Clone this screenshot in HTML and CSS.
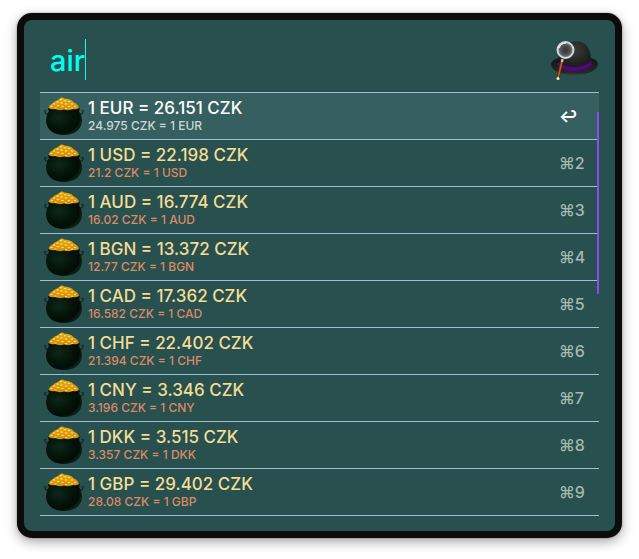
FILE: index.html
```html
<!DOCTYPE html>
<html lang="en">
<head>
<meta charset="utf-8">
<title>Exchange rates</title>
<link rel="stylesheet" href="styles.css">
</head>
<body>
<svg class="defs" aria-hidden="true">
  <defs>
    <radialGradient id="pot-fill" cx=".36" cy=".4" r=".62">
      <stop offset="0" stop-color="#10261a"/>
      <stop offset=".5" stop-color="#04170b"/>
      <stop offset=".9" stop-color="#020c05"/>
      <stop offset="1" stop-color="#0b1f14"/>
    </radialGradient>
    <linearGradient id="gold-fill" x1="0" y1="0" x2="0" y2="1">
      <stop offset="0" stop-color="#e8a516"/>
      <stop offset="1" stop-color="#d58c0c"/>
    </linearGradient>
    <symbol id="pot" viewBox="0 -1 40 40">
      <path d="M4 17L2 17Q0 14 .8 13.500Q1.800 13 2.500 14M36 17L38 17Q40 14 39.200 13.500Q38.200 13 37.500 14" fill="none" stroke="#101b17" stroke-width="1"/>
      <path d="M4.500 10.500Q7 9 20 9T35.500 10.500Q36.500 12.500 35 14Q38 18 38 23C38 33 30 38 20 38S2 33 2 23Q2 18 5 14Q3.500 12.500 4.500 10.500Z" fill="url(#pot-fill)"/>
      <path d="M4.500 11Q5 8 9 6Q10 4 13 3.500L17 .8Q19 0 20 1.500L24 2Q28 2.500 30 5.500Q34 7 35 11Q32 13 29 12Q25 14 20 12.500Q15 14 11 12Q8 13 4.500 11Z" fill="url(#gold-fill)"/>
      <g fill="#ffe052">
        <ellipse cx="17" cy="2.500" rx="1.400" ry=".7"/><ellipse cx="21" cy="3.800" rx="1.500" ry=".7"/><ellipse cx="13.500" cy="5" rx="1.500" ry=".7"/><ellipse cx="25" cy="4.500" rx="1.400" ry=".7"/><ellipse cx="17.500" cy="6" rx="1.500" ry=".7"/><ellipse cx="10" cy="7" rx="1.300" ry=".7"/><ellipse cx="22" cy="7" rx="1.500" ry=".7"/><ellipse cx="28" cy="7" rx="1.400" ry=".7"/><ellipse cx="14" cy="8.500" rx="1.500" ry=".7"/><ellipse cx="7.500" cy="9.500" rx="1.300" ry=".7"/><ellipse cx="18.500" cy="9.500" rx="1.500" ry=".7"/><ellipse cx="25" cy="9.500" rx="1.500" ry=".7"/><ellipse cx="31" cy="9.500" rx="1.300" ry=".7"/><ellipse cx="11.500" cy="11" rx="1.300" ry=".6"/><ellipse cx="22" cy="11.500" rx="1.300" ry=".6"/><ellipse cx="28" cy="11.200" rx="1.300" ry=".6"/>
      </g>
    </symbol>
  </defs>
</svg>
<main class="window">
  <header class="search">
    <input class="query" type="text" value="air" aria-label="Search" spellcheck="false">
    <svg class="hat" viewBox="0 0 51 50" aria-hidden="true">
      <defs>
        <radialGradient id="crown" cx=".5" cy=".3" r=".6"><stop offset="0" stop-color="#3a3b3b"/><stop offset="1" stop-color="#181919"/></radialGradient>
        <radialGradient id="lens"><stop offset="0" stop-color="#333"/><stop offset=".55" stop-color="#4b4e4f"/><stop offset="1" stop-color="#868a8b"/></radialGradient>
        <linearGradient id="brim" x1="0" y1="0" x2="0" y2="1"><stop offset="0" stop-color="#151616"/><stop offset=".85" stop-color="#252727"/><stop offset="1" stop-color="#3a3d3c"/></linearGradient>
      </defs>
      <path d="M3 25Q3 21 11 19L43 19Q50 21 50 25C50 31 40 36 27 36S3 32 3 25Z" fill="url(#brim)"/>
      <path d="M10 27Q9 8 22 3.500Q28 1 34 3.500Q43 7 43 23L43 27Q35 33 24 32Q14 31 10 27Z" fill="url(#crown)"/>
      <path d="M10 23Q16 28 27 28T43 21.500L44 26Q38 31.500 26 32Q14 31.500 9 26Z" fill="#55057d"/>
      <path d="M14.500 20L13.500 25" stroke="#c8cccc" stroke-width="2.400"/>
      <path d="M13.800 23L10 39" stroke="#5b2d0a" stroke-width="3.200"/>
      <path d="M13.800 23L10 39" stroke="#b66b22" stroke-width="1.400"/>
      <circle cx="10" cy="39.500" r="1.500" fill="#eee"/>
      <circle cx="17.500" cy="11" r="8" fill="url(#lens)" stroke="#d5d8d8" stroke-width="2"/>
      <path d="M11 9Q13 4 18 4" fill="none" stroke="#fff" stroke-width="1"/>
    </svg>
  </header>
  <section class="list">
    <ul class="results">
      <li><button class="row selected"><svg class="pot" aria-hidden="true"><use href="#pot"/></svg><span class="text"><span class="title">1 EUR = 26.151 CZK</span><span class="sub">24.975 CZK = 1 EUR</span></span><span class="key">↩</span></button></li>
      <li><button class="row"><svg class="pot" aria-hidden="true"><use href="#pot"/></svg><span class="text"><span class="title">1 USD = 22.198 CZK</span><span class="sub">21.2 CZK = 1 USD</span></span><span class="key">⌘2</span></button></li>
      <li><button class="row"><svg class="pot" aria-hidden="true"><use href="#pot"/></svg><span class="text"><span class="title">1 AUD = 16.774 CZK</span><span class="sub">16.02 CZK = 1 AUD</span></span><span class="key">⌘3</span></button></li>
      <li><button class="row"><svg class="pot" aria-hidden="true"><use href="#pot"/></svg><span class="text"><span class="title">1 BGN = 13.372 CZK</span><span class="sub">12.77 CZK = 1 BGN</span></span><span class="key">⌘4</span></button></li>
      <li><button class="row"><svg class="pot" aria-hidden="true"><use href="#pot"/></svg><span class="text"><span class="title">1 CAD = 17.362 CZK</span><span class="sub">16.582 CZK = 1 CAD</span></span><span class="key">⌘5</span></button></li>
      <li><button class="row"><svg class="pot" aria-hidden="true"><use href="#pot"/></svg><span class="text"><span class="title">1 CHF = 22.402 CZK</span><span class="sub">21.394 CZK = 1 CHF</span></span><span class="key">⌘6</span></button></li>
      <li><button class="row"><svg class="pot" aria-hidden="true"><use href="#pot"/></svg><span class="text"><span class="title">1 CNY = 3.346 CZK</span><span class="sub">3.196 CZK = 1 CNY</span></span><span class="key">⌘7</span></button></li>
      <li><button class="row"><svg class="pot" aria-hidden="true"><use href="#pot"/></svg><span class="text"><span class="title">1 DKK = 3.515 CZK</span><span class="sub">3.357 CZK = 1 DKK</span></span><span class="key">⌘8</span></button></li>
      <li><button class="row"><svg class="pot" aria-hidden="true"><use href="#pot"/></svg><span class="text"><span class="title">1 GBP = 29.402 CZK</span><span class="sub">28.08 CZK = 1 GBP</span></span><span class="key">⌘9</span></button></li>
    </ul>
    <div class="scrollbar"></div>
  </section>
</main>
</body>
</html>
```
FILE: styles.css
```css
body {
  margin: 0;
  padding: 13px 17px 21px;
  background: #fff;
  font-family: Inter, "Liberation Sans", sans-serif;
}

.defs {
  position: absolute;
  width: 0;
  height: 0;
}

.window {
  padding: 16px 16px 15px;
  border: 7px solid #0b0b0b;
  border-radius: 15px;
  background: #27504f;
  box-shadow: 0 4px 12px rgba(0, 0, 0, 0.35), 0 0 2px rgba(0, 0, 0, 0.4);
}

.search {
  display: flex;
  justify-content: space-between;
  align-items: flex-start;
  height: 56px;
}

.query {
  field-sizing: content;
  box-sizing: border-box;
  height: 41px;
  margin: 3px 0 0;
  padding: 2px 0 0 10px;
  border: 0;
  border-right: 1px solid #00fff0;
  outline: 0;
  background: none;
  color: #00fff0;
  font: 500 29px Inter, "Liberation Sans", sans-serif;
}

.hat {
  width: 51px;
  height: 50px;
  margin-top: 3px;
}

.list {
  position: relative;
  border-top: 1px solid #9fbfd4;
}

.results {
  margin: 0;
  padding: 0;
  list-style: none;
}

.row {
  display: flex;
  align-items: center;
  gap: 4px;
  width: 100%;
  height: 47px;
  padding: 0 8px 0 4px;
  border: 0;
  border-bottom: 1px solid #9fbfd4;
  background: none;
  color: #f3dc96;
  font: inherit;
  text-align: left;
}

.pot {
  width: 40px;
  height: 40px;
}

.text {
  display: flex;
  flex: 1;
  flex-direction: column;
}

.title {
  font-size: 17px;
  font-weight: 500;
  line-height: 20px;
}

.sub {
  color: #dc8a67;
  font-size: 12px;
  font-weight: 500;
  line-height: 16px;
}

.key {
  width: 32px;
  color: #a5b9b0;
  font-size: 16px;
  font-weight: 500;
}

.selected {
  background: #365f5f;
  color: #fff;
}

.selected .sub {
  color: #c9d8d5;
}

.selected .key {
  color: #fff;
  font-weight: 700;
}

.scrollbar {
  position: absolute;
  top: 19px;
  right: 0;
  width: 2px;
  height: 182px;
  background: #8a4bf5;
}
```
